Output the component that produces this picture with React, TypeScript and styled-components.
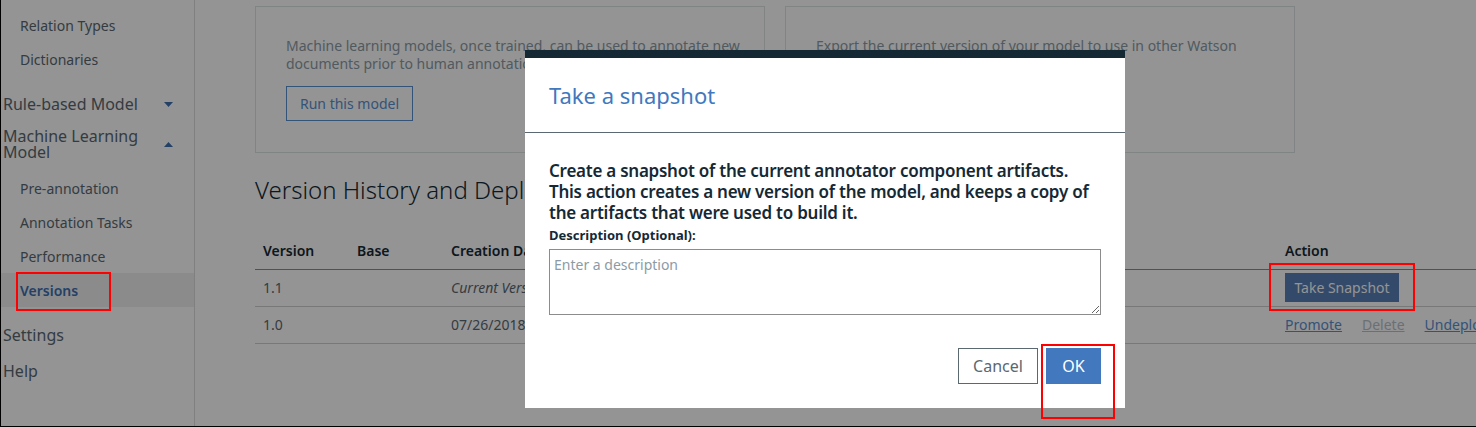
import styled, { createGlobalStyle } from 'styled-components';

const GlobalStyle = createGlobalStyle`
  html, body {
    margin: 0;
    padding: 0;
    background: #ffffff;
  }
  body {
    font-family: 'Noto Sans', 'Open Sans', Arial, sans-serif;
    color: #152935;
  }
  * {
    box-sizing: border-box;
  }
`;

const Frame = styled.div`
  position: relative;
  width: 1476px;
  height: 427px;
  overflow: hidden;
  display: flex;
  border-left: 1px solid #000;
  border-bottom: 1px solid #000;
`;

const Sidebar = styled.nav`
  width: 194px;
  flex-shrink: 0;
  border-right: 1px solid #dcdcdc;
  padding-top: 8px;
  display: flex;
  flex-direction: column;
`;

const SubItem = styled.div<{ $active?: boolean }>`
  height: 34px;
  display: flex;
  align-items: center;
  padding-left: 19px;
  font-size: 14px;
  color: ${(p) => (p.$active ? '#3d70b2' : '#5a6872')};
  font-weight: ${(p) => (p.$active ? 600 : 400)};
  background: ${(p) => (p.$active ? '#f0f0f0' : 'transparent')};
`;

const SectionItem = styled.div<{ $gapTop?: number; $gapBottom?: number }>`
  display: flex;
  align-items: center;
  justify-content: space-between;
  min-height: 36px;
  padding: 0 20px 0 2px;
  margin-top: ${(p) => p.$gapTop || 0}px;
  margin-bottom: ${(p) => p.$gapBottom || 0}px;
  font-size: 16px;
  line-height: 16px;
  color: #5a6872;
`;

const SectionLabel = styled.span`
  max-width: 140px;
`;

const Caret = styled.svg`
  width: 9px;
  height: 5px;
  margin-right: 1px;
  fill: #3d70b2;
`;

// red annotation boxes drawn over the dimmed page
const Highlight = styled.span<{ $t: number; $r: number; $b: number; $l: number }>`
  position: relative;
  display: inline-flex;
  &::after {
    content: '';
    position: absolute;
    top: ${(p) => p.$t}px;
    right: ${(p) => p.$r}px;
    bottom: ${(p) => p.$b}px;
    left: ${(p) => p.$l}px;
    border: 2px solid #ff0000;
    z-index: 30;
    pointer-events: none;
  }
`;

const Main = styled.main`
  flex: 1;
  padding: 6px 0 0 60px;
  overflow: hidden;
`;

const CardRow = styled.div`
  display: flex;
  gap: 20px;
`;

const Card = styled.section`
  width: 510px;
  height: 147px;
  border: 1px solid #dfe3e6;
  padding: 30px 30px 0 30px;
`;

const CardText = styled.p`
  margin: 0;
  font-size: 14px;
  line-height: 18px;
  color: #8c9ba5;
  width: 480px;
`;

const GhostButton = styled.button`
  margin-top: 13px;
  height: 35px;
  padding: 0 13px;
  border: 1px solid #5a8fd0;
  background: transparent;
  color: #5a8fd0;
  font-family: inherit;
  font-size: 14px;
`;

const Heading = styled.h2`
  margin: 20px 0 0 0;
  font-size: 24px;
  font-weight: 300;
  line-height: 34px;
  color: #152935;
`;

const Table = styled.table`
  margin-top: 26px;
  width: 1400px;
  table-layout: fixed;
  border-collapse: collapse;
  font-size: 14px;
  color: #152935;

  th {
    text-align: left;
    font-weight: 600;
    height: 36px;
    padding: 0 8px;
    border-bottom: 1px solid #8c8c8c;
  }
  td {
    height: 37px;
    padding: 0 8px;
    border-bottom: 1px solid #cfcfcf;
    color: #5a6872;
    white-space: nowrap;
  }
`;

const Italic = styled.span`
  font-style: italic;
`;

const PrimarySmall = styled.button`
  height: 29px;
  width: 114px;
  padding: 0;
  border: none;
  background: #5880b8;
  color: #ffffff;
  font-family: inherit;
  font-size: 14px;
`;

const LinkRow = styled.div`
  display: flex;
  gap: 20px;
`;

const TableLink = styled.a<{ $disabled?: boolean }>`
  color: ${(p) => (p.$disabled ? '#b8c1c9' : '#5a8fd0')};
  text-decoration: underline;
  white-space: nowrap;
`;

const Overlay = styled.div`
  position: absolute;
  inset: 0;
  background: rgba(0, 0, 0, 0.42);
  z-index: 10;
`;

const Modal = styled.div`
  position: absolute;
  left: 524px;
  top: 50px;
  width: 600px;
  height: 358px;
  background: #ffffff;
  border-top: 8px solid #152935;
  z-index: 20;
  display: flex;
  flex-direction: column;
`;

const ModalHeader = styled.header`
  height: 75px;
  padding: 0 24px;
  display: flex;
  align-items: center;
  border-bottom: 1px solid #5a6872;
`;

const ModalTitle = styled.h3`
  margin: 0;
  font-size: 22px;
  font-weight: 400;
  color: #4178be;
`;

const ModalBody = styled.div`
  padding: 27px 24px 0 24px;
  display: flex;
  flex-direction: column;
`;

const BodyText = styled.p`
  margin: 0;
  font-size: 17px;
  letter-spacing: -0.25px;
  line-height: 21px;
  font-weight: 600;
  color: #152935;
`;

const Label = styled.label`
  margin-top: 3px;
  font-size: 13px;
  font-weight: 700;
  line-height: 18px;
  color: #152935;
`;

const TextArea = styled.textarea`
  margin-top: 5px;
  width: 552px;
  height: 66px;
  border: 1px solid #8c8c8c;
  padding: 5px 4px;
  font-family: inherit;
  font-size: 14px;
  resize: vertical;
  &::placeholder {
    color: #8c9ba5;
  }
`;

const ModalFooter = styled.footer`
  margin-top: 33px;
  padding: 0 24px;
  display: flex;
  justify-content: flex-end;
  gap: 8px;
`;

const FooterButton = styled.button<{ $primary?: boolean }>`
  height: 36px;
  width: ${(p) => (p.$primary ? 55 : 80)}px;
  padding: 0;
  font-family: inherit;
  font-size: 16px;
  border: 1px solid ${(p) => (p.$primary ? '#4178be' : '#5a6872')};
  background: ${(p) => (p.$primary ? '#4178be' : '#ffffff')};
  color: ${(p) => (p.$primary ? '#ffffff' : '#5a6872')};
`;

const subTop = ['Relation Types', 'Dictionaries'];
const mlItems = ['Pre-annotation', 'Annotation Tasks', 'Performance'];

const CaretDown = () => (
  <Caret viewBox="0 0 9 5">
    <path d="M0 0h9L4.5 5z" />
  </Caret>
);

const CaretUp = () => (
  <Caret viewBox="0 0 9 5">
    <path d="M0 5h9L4.5 0z" />
  </Caret>
);

const App = () => {
  return (
    <>
      <GlobalStyle />
      <Frame>
        <Sidebar>
          {subTop.map((name) => (
            <SubItem key={name}>{name}</SubItem>
          ))}
          <SectionItem $gapTop={10}>
            <SectionLabel>Rule-based Model</SectionLabel>
            <CaretDown />
          </SectionItem>
          <SectionItem $gapTop={4} $gapBottom={9}>
            <SectionLabel>Machine Learning Model</SectionLabel>
            <CaretUp />
          </SectionItem>
          {mlItems.map((name) => (
            <SubItem key={name}>{name}</SubItem>
          ))}
          <SubItem $active>
            <Highlight $t={-9} $r={-33} $b={-11} $l={-4}>
              Versions
            </Highlight>
          </SubItem>
          <SectionItem $gapTop={10}>Settings</SectionItem>
          <SectionItem>Help</SectionItem>
        </Sidebar>

        <Main>
          <CardRow>
            <Card>
              <CardText>
                Machine learning models, once trained, can be used to annotate new
                documents prior to human annotation.
              </CardText>
              <GhostButton>Run this model</GhostButton>
            </Card>
            <Card>
              <CardText>
                Export the current version of your model to use in other Watson
                services.
              </CardText>
            </Card>
          </CardRow>

          <Heading>Version History and Deployment</Heading>

          <Table>
            <colgroup>
              <col style={{ width: 94 }} />
              <col style={{ width: 94 }} />
              <col style={{ width: 180 }} />
              <col style={{ width: 400 }} />
              <col style={{ width: 254 }} />
              <col />
            </colgroup>
            <thead>
              <tr>
                <th>Version</th>
                <th>Base</th>
                <th>Creation Date</th>
                <th>Status</th>
                <th>Notes</th>
                <th>Action</th>
              </tr>
            </thead>
            <tbody>
              <tr>
                <td>1.1</td>
                <td></td>
                <td>
                  <Italic>Current Version</Italic>
                </td>
                <td></td>
                <td></td>
                <td>
                  <Highlight $t={-10} $r={-16} $b={-9} $l={-16}>
                    <PrimarySmall>Take Snapshot</PrimarySmall>
                  </Highlight>
                </td>
              </tr>
              <tr>
                <td>1.0</td>
                <td></td>
                <td>07/26/2018</td>
                <td>Not deployed</td>
                <td></td>
                <td>
                  <LinkRow>
                    <TableLink>Promote</TableLink>
                    <TableLink $disabled>Delete</TableLink>
                    <TableLink>Undeploy</TableLink>
                  </LinkRow>
                </td>
              </tr>
            </tbody>
          </Table>
        </Main>

        <Overlay />

        <Modal>
          <ModalHeader>
            <ModalTitle>Take a snapshot</ModalTitle>
          </ModalHeader>
          <ModalBody>
            <BodyText>
              Create a snapshot of the current annotator component artifacts.
              This action creates a new version of the model, and keeps a copy
              of the artifacts that were used to build it.
            </BodyText>
            <Label>Description (Optional):</Label>
            <TextArea placeholder="Enter a description" />
          </ModalBody>
          <ModalFooter>
            <FooterButton>Cancel</FooterButton>
            <Highlight $t={-4} $r={-14} $b={-35} $l={-5}>
              <FooterButton $primary>OK</FooterButton>
            </Highlight>
          </ModalFooter>
        </Modal>
      </Frame>
    </>
  );
};

export default App;
